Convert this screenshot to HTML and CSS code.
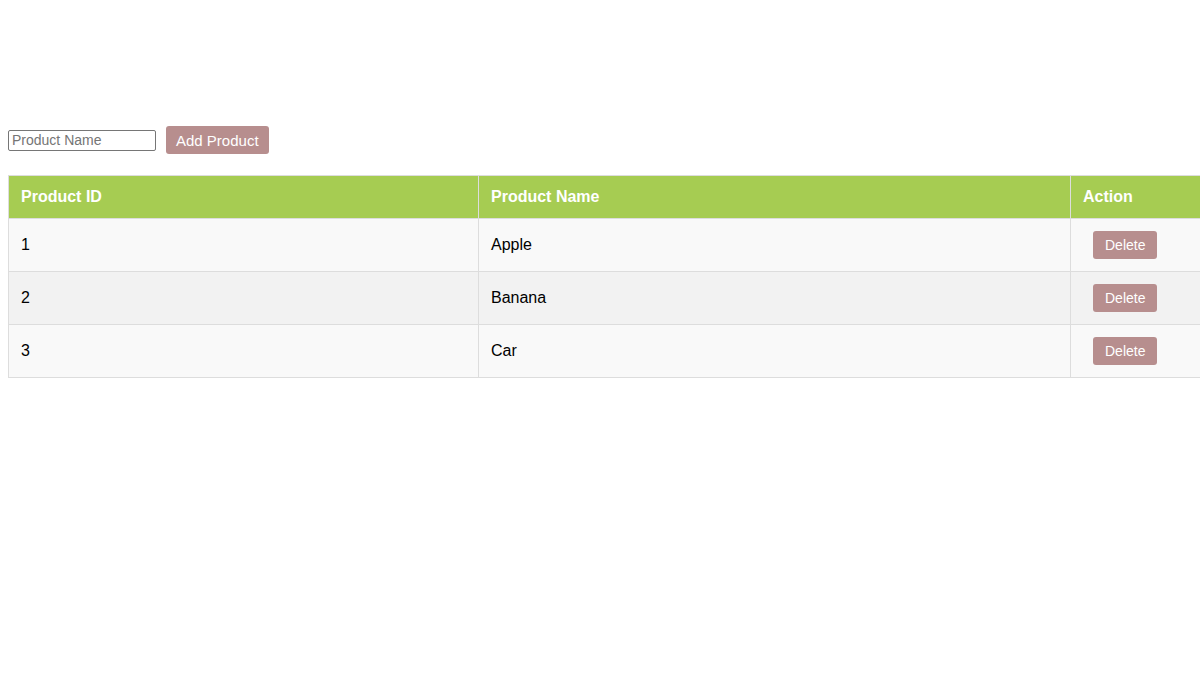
FILE: index.html
```html
<!DOCTYPE html>
<html lang="en">
<head>
  <meta charset="UTF-8" />
  <title>Products</title>
  <link rel="stylesheet" href="styles.css">
</head>
<body>
  <div class="toolbar">
    <input type="text" id="product-name" placeholder="Product Name" />
    <button class="btn" id="add-btn">Add Product</button>
  </div>

  <table class="products">
    <thead>
      <tr>
        <th class="col-id">Product ID</th>
        <th class="col-name">Product Name</th>
        <th>Action</th>
      </tr>
    </thead>
    <tbody id="product-list">
      <tr>
        <td>1</td>
        <td>Apple</td>
        <td><button class="btn btn-small">Delete</button></td>
      </tr>
      <tr>
        <td>2</td>
        <td>Banana</td>
        <td><button class="btn btn-small">Delete</button></td>
      </tr>
      <tr>
        <td>3</td>
        <td>Car</td>
        <td><button class="btn btn-small">Delete</button></td>
      </tr>
    </tbody>
  </table>
</body>
</html>
```
FILE: styles.css
```css
html { overflow: hidden; }

body {
  margin: 8px;
  margin-right: 0;
  font-family: "Liberation Sans", Arial, sans-serif;
  color: #000;
  background-color: #fff;
}

.toolbar {
  display: flex;
  align-items: center;
  gap: 10px;
  margin-top: 118px;
  margin-bottom: 21px;
}

.toolbar input {
  width: 148px;
  height: 21px;
  box-sizing: border-box;
  padding: 1px 3px;
  border: 1px solid #767676;
  border-radius: 2px;
  font-family: "Liberation Sans", Arial, sans-serif;
  font-size: 14px;
  margin: 0;
}

.toolbar input::placeholder { color: #757575; }

.btn {
  background-color: #b78e8e;
  color: #fff;
  border: none;
  border-radius: 3px;
  height: 28px;
  padding: 0 10px;
  font-family: "Liberation Sans", Arial, sans-serif;
  font-size: 15px;
  cursor: pointer;
}

.btn-small {
  font-size: 14px;
  padding: 0 12px;
  margin-left: 10px;
}

.products {
  border-collapse: collapse;
  table-layout: fixed;
  width: calc(100% + 20px);
}

.products th,
.products td {
  border: 1px solid #ddd;
  padding: 0 12px;
  text-align: left;
  font-size: 16px;
}

.products th {
  background-color: #a6cc52;
  color: #fff;
  font-weight: bold;
  height: 42px;
}

.products td { height: 52px; }

.col-id { width: 445px; }
.col-name { width: 567px; }

.products tbody tr:nth-child(odd) { background-color: #f9f9f9; }
.products tbody tr:nth-child(even) { background-color: #f2f2f2; }
```
